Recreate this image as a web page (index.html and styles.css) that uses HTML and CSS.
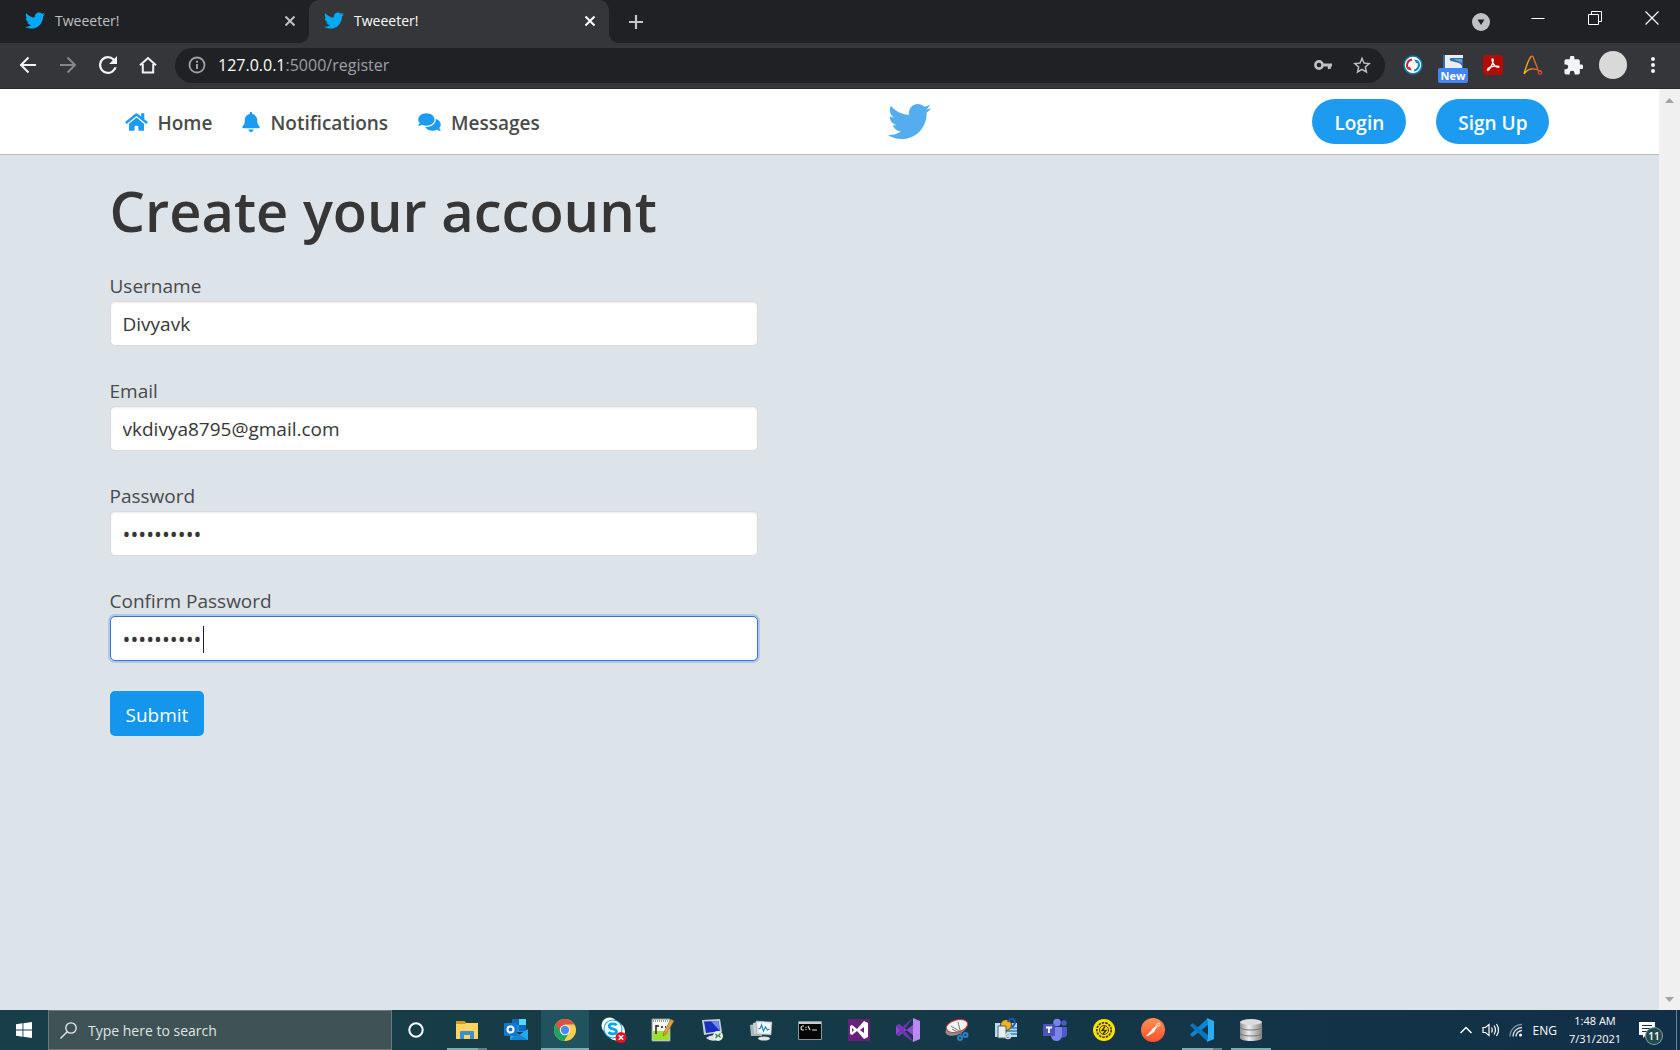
FILE: index.html
```html
<!DOCTYPE html>
<html lang="en">
<head>
<meta charset="utf-8">
<title>Tweeeter!</title>
<link rel="stylesheet" href="styles.css">
</head>
<body>
<svg class="sprite" aria-hidden="true">
  <symbol id="bird" viewBox="0 48 512 416"><path d="M459.37 151.716c.325 4.548.325 9.097.325 13.645 0 138.72-105.583 298.558-298.558 298.558-59.452 0-114.68-17.219-161.137-47.106 8.447.974 16.568 1.299 25.34 1.299 49.055 0 94.213-16.568 130.274-44.832-46.132-.975-84.792-31.188-98.112-72.772 6.498.974 12.995 1.624 19.818 1.624 9.421 0 18.843-1.3 27.614-3.573-48.081-9.747-84.143-51.98-84.143-102.985v-1.299c13.969 7.797 30.214 12.67 47.431 13.319-28.264-18.843-46.781-51.005-46.781-87.391 0-19.492 5.197-37.36 14.294-52.954 51.655 63.675 129.3 105.258 216.365 109.807-1.624-7.797-2.599-15.918-2.599-24.04 0-57.828 46.782-104.934 104.934-104.934 30.213 0 57.502 12.67 76.67 33.137 23.715-4.548 46.456-13.32 66.599-25.34-7.798 24.366-24.366 44.833-46.132 57.827 21.117-2.273 41.584-8.122 60.426-16.243-14.292 20.791-32.161 39.308-52.628 54.253z"/></symbol>
  <symbol id="cross" viewBox="0 0 12 12"><path d="M1.5 1.5l9 9M10.500 1.500l-9 9" fill="none" stroke="currentColor" stroke-width="2"/></symbol>
</svg>

<header class="browser">
  <div class="tabstrip">
    <div class="tab">
      <svg class="favicon"><use href="#bird"/></svg>
      <span class="tab-title">Tweeeter!</span>
      <button class="icon-btn tab-close" aria-label="Close tab"><svg width="12" height="12"><use href="#cross"/></svg></button>
    </div>
    <div class="tab tab-active">
      <svg class="favicon"><use href="#bird"/></svg>
      <span class="tab-title">Tweeeter!</span>
      <button class="icon-btn tab-close" aria-label="Close tab"><svg width="12" height="12"><use href="#cross"/></svg></button>
    </div>
    <button class="icon-btn new-tab" aria-label="New tab"><svg width="16" height="16" viewBox="0 0 16 16"><path d="M8 1v14M1 8h14" stroke="#c4c7ca" stroke-width="2.200"/></svg></button>
    <div class="window-controls">
      <button class="icon-btn" aria-label="Search tabs"><svg width="18" height="26" viewBox="0 0 18 26"><circle cx="9" cy="17" r="9" fill="#bdc1c6"/><path d="M5.500 14.500h7L9 20z" fill="#202124"/></svg></button>
      <button class="icon-btn" aria-label="Minimize"><svg width="14" height="14" viewBox="0 0 14 14"><path d="M.5 7.500h13" stroke="#fff"/></svg></button>
      <button class="icon-btn" aria-label="Restore"><svg width="14" height="14" viewBox="0 0 14 14" fill="none" stroke="#fff"><path d="M.5 3.500h10v10H.5zM3.500 3.500v-3h10v10h-3"/></svg></button>
      <button class="icon-btn" aria-label="Close window"><svg width="14" height="14" viewBox="0 0 14 14"><path d="M.5.5l13 13M13.500.5l-13 13" stroke="#fff" stroke-width="1.200"/></svg></button>
    </div>
  </div>

  <div class="toolbar">
    <div class="nav-buttons">
      <button class="icon-btn" aria-label="Back"><svg width="18" height="18" viewBox="0 0 18 18" fill="none" stroke="#f1f3f4" stroke-width="2"><path d="M17 9H2M9.500 1.500L2 9l7.500 7.500"/></svg></button>
      <button class="icon-btn" aria-label="Forward"><svg width="18" height="18" viewBox="0 0 18 18" fill="none" stroke="#85868a" stroke-width="2"><path d="M1 9h15M8.500 1.500L16 9l-7.500 7.500"/></svg></button>
      <button class="icon-btn" aria-label="Reload"><svg width="18" height="18" viewBox="4 4 16 16" fill="#f1f3f4"><path d="M17.650 6.350A7.958 7.958 0 0 0 12 4a8 8 0 1 0 7.730 10h-2.080A6 6 0 1 1 12 6c1.660 0 3.140.69 4.220 1.780L13 11h7V4z"/></svg></button>
      <button class="icon-btn" aria-label="Home"><svg width="18" height="18" viewBox="0 0 18 18" fill="none" stroke="#f1f3f4" stroke-width="2"><path d="M1 9.300L9 2l8 7.300M3.800 8v8.500h10.400V8"/></svg></button>
    </div>
    <div class="omnibox">
      <svg width="18" height="18" viewBox="0 0 18 18"><circle cx="9" cy="9" r="7.500" fill="none" stroke="#9aa0a6" stroke-width="1.800"/><path d="M9 8v5M9 4.800v2" stroke="#9aa0a6" stroke-width="2"/></svg>
      <div class="url" role="textbox" aria-label="Address"><b>127.0.0.1</b>:5000/register</div>
      <button class="icon-btn" aria-label="Passwords"><svg width="18" height="18" viewBox="0 0 18 18"><circle cx="5" cy="9" r="3.600" fill="none" stroke="#bdc1c6" stroke-width="2.600"/><path d="M9 7.500h9v3h-1.200V13h-3v-2.500H9z" fill="#bdc1c6"/></svg></button>
      <button class="icon-btn" aria-label="Bookmark"><svg width="18" height="18" viewBox="2 2 20 19" fill="#bdc1c6"><path d="M22 9.240l-7.190-.62L12 2 9.190 8.630 2 9.240l5.460 4.730L5.820 21 12 17.270 18.180 21l-1.630-7.030zM12 15.400l-3.760 2.270 1-4.280-3.320-2.880 4.380-.38L12 6.100l1.710 4.040 4.380.38-3.320 2.880 1 4.280z"/></svg></button>
    </div>
    <div class="extensions">
      <button class="icon-btn" aria-label="Recorder"><svg width="20" height="20" viewBox="0 0 20 20"><circle cx="10" cy="10" r="9" fill="#fff" stroke="#0e76a8" stroke-width="1.600"/><path d="M9 4.500a5.600 5.600 0 0 0-3.600 9.200" fill="none" stroke="#c62828" stroke-width="2"/><path d="M4.500 14.500l4.500 1-2.500-4z" fill="#c62828"/><path d="M11 15.500a5.600 5.600 0 0 0 3.600-9.200" fill="none" stroke="#1a86b8" stroke-width="2"/><path d="M15.500 5.500l-4.500-1 2.500 4z" fill="#1a86b8"/></svg></button>
      <button class="icon-btn ext-badged" aria-label="Selenium"><svg width="20" height="20" viewBox="0 0 20 20"><path d="M0 0h20v14H0z" fill="#e9eef3"/><path d="M0 0h20v3H8Q5 4 8 6l8 2q4 2 3 6h1V0H0zM0 0v14h2V0z" fill="#2f6fa5"/><path d="M10 4h9v4z" fill="#6aa0cc"/></svg><span class="ext-badge">New</span></button>
      <button class="icon-btn" aria-label="Acrobat"><svg width="20" height="20" viewBox="0 0 20 20"><rect width="20" height="20" rx="3" fill="#b30b00"/><path d="M9.500 4c-1.200 0 0 4.500 2.300 6.700 1.700 1.700 4.400 2 4.200 1-.3-1.400-8-.4-10.700 1.600-1.300 1-1.200 2.200-.3 2 2-.6 5-7.500 5.200-9.600.1-1-.2-1.700-.7-1.700z" fill="none" stroke="#fff" stroke-width="1.300"/></svg></button>
      <button class="icon-btn" aria-label="Axe"><svg width="20" height="20" viewBox="0 0 20 20"><defs><linearGradient id="flame" x1="0" x2="1"><stop offset="0" stop-color="#f7c21a"/><stop offset=".5" stop-color="#ee7b22"/><stop offset="1" stop-color="#dc4a2c"/></linearGradient></defs><path d="M1 19C3 12 6 4 8 1.500c1-1 2 0 2.500 1.500l5 13M1 19c2-3 4-4.500 7-5 4-.5 7 .5 10 2.500" fill="none" stroke="url(#flame)" stroke-width="1.300"/><circle cx="17" cy="17.500" r="1.700" fill="none" stroke="#dc4a2c" stroke-width="1.300"/></svg></button>
      <button class="icon-btn" aria-label="Extensions"><svg width="19" height="19" viewBox="1.500 1.500 21 21" fill="#f1f3f4"><path d="M20.500 11H19V7a2 2 0 0 0-2-2h-4V3.500a2.500 2.500 0 0 0-5 0V5H4a2 2 0 0 0-2 2v3.800h1.500a2.700 2.700 0 0 1 0 5.400H2V20a2 2 0 0 0 2 2h3.800v-1.500a2.700 2.700 0 0 1 5.400 0V22H17a2 2 0 0 0 2-2v-4h1.500a2.500 2.500 0 0 0 0-5z"/></svg></button>
      <button class="icon-btn" aria-label="Profile"><span class="avatar"></span></button>
      <button class="icon-btn" aria-label="Menu"><svg width="4" height="18" viewBox="0 0 4 18" fill="#f1f3f4"><circle cx="2" cy="3" r="2"/><circle cx="2" cy="9" r="2"/><circle cx="2" cy="15" r="2"/></svg></button>
    </div>
  </div>
</header>

<div class="viewport">
  <div class="page">
    <nav class="navbar">
      <div class="container navbar-inner">
        <div class="nav-links">
          <a href="#home"><svg width="23" height="20" viewBox="0 0 576 512"><path d="M280.370 148.260L96 300.110V464a16 16 0 0 0 16 16l112.060-.29a16 16 0 0 0 15.920-16V368a16 16 0 0 1 16-16h64a16 16 0 0 1 16 16v95.640a16 16 0 0 0 16 16.050L464 480a16 16 0 0 0 16-16V300L295.670 148.260a12.190 12.190 0 0 0-15.300 0zM571.600 251.470L488 182.560V44.050a12 12 0 0 0-12-12h-56a12 12 0 0 0-12 12v72.610L318.470 43a48 48 0 0 0-61 0L4.340 251.470a12 12 0 0 0-1.600 16.900l25.500 31A12 12 0 0 0 45.150 301l235.220-193.740a12.190 12.190 0 0 1 15.300 0L530.900 301a12 12 0 0 0 16.900-1.600l25.500-31a12 12 0 0 0-1.700-16.930z"/></svg>Home</a>
          <a href="#notifications"><svg width="18" height="20" viewBox="0 0 448 512"><path d="M224 512c35.320 0 63.970-28.650 63.970-64H160.030c0 35.350 28.650 64 63.970 64zm215.390-149.710c-19.320-20.760-55.470-51.990-55.470-154.290 0-77.700-54.480-139.900-127.940-155.160V32c0-17.670-14.320-32-31.980-32s-31.980 14.330-31.980 32v20.840C118.560 68.100 64.080 130.300 64.080 208c0 102.300-36.150 133.530-55.470 154.290-6 6.450-8.660 14.160-8.610 21.710.11 16.400 12.980 32 32.100 32h383.800c19.120 0 32-15.600 32.100-32 .05-7.550-2.610-15.270-8.610-21.710z"/></svg>Notifications</a>
          <a href="#messages"><svg width="23" height="20" viewBox="0 0 576 512"><path d="M416 192c0-88.400-93.100-160-208-160S0 103.600 0 192c0 34.300 14.100 65.900 38 92-13.400 30.200-35.500 54.200-35.800 54.500-2.200 2.300-2.800 5.700-1.500 8.700S4.800 352 8 352c36.600 0 66.900-12.300 88.700-25 32.200 15.700 70.300 25 111.300 25 114.900 0 208-71.600 208-160zm122 220c23.900-26 38-57.700 38-92 0-66.900-53.500-124.200-129.300-148.100.9 6.600 1.300 13.300 1.300 20.100 0 105.900-107.700 192-240 192-10.800 0-21.300-.8-31.700-1.900C207.800 439.600 281.800 480 368 480c41 0 79.100-9.200 111.300-25 21.800 12.700 52.100 25 88.700 25 3.200 0 6.100-1.900 7.300-4.800 1.300-2.900.7-6.300-1.500-8.700-.3-.2-22.400-24.200-35.800-54.500z"/></svg>Messages</a>
        </div>
        <a class="brand" href="#top" aria-label="Tweeeter"><svg width="43" height="35"><use href="#bird"/></svg></a>
        <div class="nav-actions">
          <button class="pill">Login</button>
          <button class="pill">Sign Up</button>
        </div>
      </div>
    </nav>

    <main class="container">
      <h1>Create your account</h1>
      <form class="register">
        <div class="field">
          <label for="username">Username</label>
          <input id="username" type="text" value="Divyavk">
        </div>
        <div class="field">
          <label for="email">Email</label>
          <input id="email" type="email" value="vkdivya8795@gmail.com">
        </div>
        <div class="field">
          <label for="password">Password</label>
          <input id="password" type="password" value="tweeter123">
        </div>
        <div class="field">
          <label for="confirm">Confirm Password</label>
          <div class="control">
            <input id="confirm" class="is-focused" type="password" value="tweeter123">
            <span class="caret"></span>
          </div>
        </div>
        <button class="submit" type="submit">Submit</button>
      </form>
    </main>
  </div>
  <div class="scrollbar" aria-hidden="true">
    <svg width="9" height="5" viewBox="0 0 9 5"><path d="M0 5L4.500 0 9 5z"/></svg>
    <svg width="9" height="5" viewBox="0 0 9 5"><path d="M0 0h9L4.500 5z"/></svg>
  </div>
</div>

<footer class="taskbar">
  <button class="start icon-btn" aria-label="Start"><svg width="16" height="16" viewBox="0 0 16 16" fill="#fff"><path d="M0 2.200l6.500-.9v6.200H0zM7.400 1.200L16 0v7.500H7.400zM0 8.500h6.500v6.200L0 13.800zM7.400 8.500H16V16l-8.600-1.200z"/></svg></button>
  <label class="search">
    <svg width="17" height="17" viewBox="0 0 17 17" fill="none" stroke="#e8eded" stroke-width="1.300"><circle cx="11" cy="6" r="5.200"/><path d="M7.200 9.800L.5 16.500"/></svg>
    <input type="text" placeholder="Type here to search" aria-label="Type here to search">
  </label>
  <button class="task icon-btn" aria-label="Cortana"><svg width="16" height="16" viewBox="0 0 16 16"><circle cx="8" cy="8" r="6.700" fill="none" stroke="#fff" stroke-width="2"/></svg></button>
  <div class="apps">
    <button class="task icon-btn running stacked" aria-label="File Explorer"><svg width="24" height="24" viewBox="0 0 24 24"><path d="M1 3h8l2 2h12v16H1z" fill="#ffd45e"/><path d="M1 3h8l2 2-1 1H1z" fill="#d99a1c"/><path d="M5 21v-7q0-1 1-1h12q1 0 1 1v7h-4v-4H9v4z" fill="#3b8fd8"/></svg></button>
    <button class="task icon-btn" aria-label="Outlook"><svg width="24" height="24" viewBox="0 0 24 24"><path d="M8 1h14v13H8z" fill="#1490df"/><path d="M15 1h7v6h-7z" fill="#50d9ff"/><path d="M8 1h7v6H8zM15 7h7v6h-7z" fill="#1068b8"/><path d="M6 12l9 5 9-6v11H6z" fill="#28a8ea"/><path d="M24 22L13 15l-7 7z" fill="#1784d8"/><rect y="5" width="13" height="13" rx="1" fill="#0f78d4"/><circle cx="6.500" cy="11.500" r="3" fill="none" stroke="#fff" stroke-width="2"/></svg></button>
    <button class="task icon-btn running current" aria-label="Chrome"><svg width="24" height="24" viewBox="0 0 24 24"><circle cx="12" cy="12" r="11" fill="#fdce4b"/><path d="M2.500 6.500A11 11 0 0 1 21.500 6.500H12L7.200 14.800z" fill="#dd5144"/><path d="M2.500 6.500A11 11 0 0 0 11 23l5-8.300L7.500 14z" fill="#1da261"/><circle cx="12" cy="12" r="5.200" fill="#f1f1f1"/><circle cx="12" cy="12" r="4.200" fill="#4c8bf5"/></svg></button>
    <button class="task icon-btn" aria-label="Skype"><svg width="26" height="26" viewBox="0 0 26 26"><circle cx="8.500" cy="8.500" r="8" fill="#fff"/><circle cx="15" cy="14.500" r="9" fill="#fff"/><circle cx="12" cy="12" r="9.500" fill="#0aa6e8"/><circle cx="12" cy="12" r="8.500" fill="#fff"/><path d="M15.500 8.300c-1.300-2-7.300-2.300-7.300.9 0 3.500 7.300 2 7.300 5.300 0 3.200-6.500 3-7.800.5" fill="none" stroke="#0aa6e8" stroke-width="2.800"/><circle cx="20" cy="20.500" r="5.500" fill="#e81123"/><path d="M17.800 18.300l4.400 4.400M22.200 18.300l-4.400 4.400" stroke="#fff" stroke-width="1.500"/></svg></button>
    <button class="task icon-btn" aria-label="Notepad++"><svg width="24" height="24" viewBox="0 0 24 24"><path d="M1 1h18v22H1z" fill="#f5f7f2" stroke="#8b9388"/><path d="M2 13h16v9H2z" fill="#9be02c"/><path d="M2 3h16" stroke="#999" stroke-dasharray="1 1" stroke-width="2"/><path d="M5 7v9M5 8h3M10 9h2M14 9h1" stroke="#222" stroke-width="1.500"/><path d="M20 1l3 2-8 13-3 2 1-4z" fill="#e8a13a" stroke="#8a5a1c" stroke-width=".6"/></svg></button>
    <button class="task icon-btn" aria-label="Remote Desktop"><svg width="24" height="24" viewBox="0 0 24 24"><path d="M2 2l18-1 2 13-18 3z" fill="#c5ccd6"/><path d="M4 3.500L18.500 3l1.500 10-14 2z" fill="#1a2fc0"/><path d="M11 3.300L18.500 3l1.500 10z" fill="#6f8cf0"/><path d="M6 20q5-4 11-2v4q-6 2-11-2z" fill="#dfe3e6"/><circle cx="18" cy="18" r="5" fill="#e9eceb"/><path d="M15.500 16l2 2-2 2M20.500 15.500l-2 2 2 2" fill="none" stroke="#2a8a3a" stroke-width="1.300"/></svg></button>
    <button class="task icon-btn" aria-label="Resource Monitor"><svg width="24" height="24" viewBox="0 0 24 24"><path d="M1 7l12-2v13H2z" fill="#aab4b8"/><path d="M4 5l11-2v13H5z" fill="#c8d0d3"/><path d="M7 3l16 1-1 13-14-1z" fill="#e6ebee" stroke="#98a4aa" stroke-width=".6"/><path d="M9 5l12 1-.6 9L10 14z" fill="#f7fcff"/><path d="M9.500 11l2-1 1-3 2 6 2-4 2 3 2-1" fill="none" stroke="#2a83c0" stroke-width="1.200"/><ellipse cx="15" cy="20.500" rx="6" ry="2" fill="#dde2e4"/></svg></button>
    <button class="task icon-btn" aria-label="Command Prompt"><svg width="24" height="24" viewBox="0 0 24 24"><path d="M.5 3.500h23v18H.5z" fill="#060606" stroke="#8d9699"/><path d="M1 4h22v2H1z" fill="#c8cdd0"/><path d="M6 8H4.500Q3 8 3 10t1.500 2H6M8 9v1M8 11v1M10 8l2 4M14 12h5" fill="none" stroke="#ddd" stroke-width="1.200"/></svg></button>
    <button class="task icon-btn" aria-label="Visual Studio 2012"><svg width="24" height="24" viewBox="0 0 24 24"><path d="M1 1h22v22H1z" fill="#68217a"/><path d="M3 8l2-1 5 4 7-8 4 2v14l-4 2-7-8-5 4-2-1zM5 10v4l2-2zM17 9l-4 3 4 3z" fill="#fff" fill-rule="evenodd"/></svg></button>
    <button class="task icon-btn" aria-label="Visual Studio"><svg width="24" height="24" viewBox="0 0 24 24"><path d="M0 8l3-2 15 12V6L3 18l-3-2V8l4 4-4 4z" fill="#8c4bcf"/><path d="M17 0L3 18l-3-2L12 4zM0 8l3-2 15 18-8-5z" fill="#7534b8"/><path d="M17 0l7 3v18l-7 3z" fill="#b98af2"/></svg></button>
    <button class="task icon-btn" aria-label="Snipping Tool"><svg width="24" height="24" viewBox="0 0 24 24"><ellipse cx="11" cy="11" rx="11" ry="6" fill="#8a8f92" transform="rotate(-20 11 11)"/><ellipse cx="12" cy="8" rx="11" ry="6" fill="#f5f5f5" stroke="#d23a3a" transform="rotate(-15 12 8)"/><path d="M13 4l3 12M7 11l10 6M6 8l8 5" stroke="#777"/><circle cx="15" cy="20" r="2" fill="none" stroke="#2782d0" stroke-width="2"/><circle cx="20.500" cy="17" r="2" fill="none" stroke="#2782d0" stroke-width="2"/></svg></button>
    <button class="task icon-btn" aria-label="Server Tools"><svg width="24" height="24" viewBox="0 0 24 24"><path d="M1 5h22v14H1z" fill="#b9daf5"/><path d="M5 10h18M5 13h18M5 16h18" stroke="#3a83c8" stroke-width="1.500"/><circle cx="12" cy="7" r="5.500" fill="#f0b323" stroke="#222" stroke-width=".8"/><path d="M14 4q1-3 4-3t3 4q-1 3-3 4" fill="none" stroke="#2257a8" stroke-width="2"/><path d="M4 8h8v12H4z" fill="#e6eef2" stroke="#4f656f"/><circle cx="14" cy="18" r="2.500" fill="none" stroke="#d5dadd" stroke-width="1.500"/></svg></button>
    <button class="task icon-btn" aria-label="Teams"><svg width="24" height="24" viewBox="0 0 24 24"><circle cx="21" cy="5" r="2.700" fill="#5059c9"/><path d="M17 9h7v8q-2 4-6 2z" fill="#5059c9"/><circle cx="14" cy="4.500" r="3.800" fill="#7b83eb"/><path d="M8 9h11v9q-1 5-5.500 5T8 18z" fill="#7b83eb"/><rect y="6" width="12" height="12" rx="1" fill="#4b53bc"/><path d="M3 9.500h6M6 9.500V15" stroke="#fff" stroke-width="1.800"/></svg></button>
    <button class="task icon-btn" aria-label="Gear"><svg width="24" height="24" viewBox="0 0 24 24"><circle cx="12" cy="12" r="11" fill="#ffe10a"/><circle cx="12" cy="12" r="7.200" fill="none" stroke="#3d3a12" stroke-width="1.600" stroke-dasharray="2.500 1"/><circle cx="12" cy="12" r="4.500" fill="none" stroke="#3d3a12"/><path d="M13 8.500l-3 4h4l-3 3.500" fill="none" stroke="#3d3a12" stroke-width="1.500"/></svg></button>
    <button class="task icon-btn" aria-label="Postman"><svg width="24" height="24" viewBox="0 0 24 24"><defs><linearGradient id="ember" y2="1" x2="0"><stop offset="0" stop-color="#ff9152"/><stop offset="1" stop-color="#ff4f2a"/></linearGradient></defs><circle cx="12" cy="12" r="12" fill="url(#ember)"/><path d="M5 18l6-6 5-3-3 5-6 4z" fill="#fff"/><circle cx="17.500" cy="6.500" r="1.500" fill="none" stroke="#fff"/><path d="M11 12l5-4" stroke="#fff" stroke-width="1.500"/></svg></button>
    <button class="task icon-btn running stacked" aria-label="VS Code"><svg width="24" height="24" viewBox="0 0 24 24"><path d="M18 0L1 15.500 0 17l2 1.500h1L18 7z" fill="#0a86d6"/><path d="M18 24L1 8.500 0 7l2-1.500h1L18 17z" fill="#0a76bd"/><path d="M17 0l7 3v18l-7 3 1-4V4z" fill="#29aef5"/></svg></button>
    <button class="task icon-btn running" aria-label="SQLite Browser"><svg width="24" height="24" viewBox="0 0 24 24"><defs><linearGradient id="steel"><stop offset="0" stop-color="#8d8d8d"/><stop offset=".4" stop-color="#eee"/><stop offset="1" stop-color="#858585"/></linearGradient></defs><path d="M1 4v16c0 4 22 4 22 0V4z" fill="url(#steel)"/><ellipse cx="12" cy="4" rx="11" ry="3" fill="#dcdcdc"/><path d="M1 9c0 4 22 4 22 0M1 15c0 4 22 4 22 0" fill="none" stroke="#777" stroke-width="1"/></svg></button>
  </div>
  <div class="tray">
    <button class="icon-btn" aria-label="Show hidden icons"><svg width="12" height="8" viewBox="0 0 12 8"><path d="M.5 7L6 1.500 11.500 7" fill="none" stroke="#fff" stroke-width="1.500"/></svg></button>
    <button class="icon-btn" aria-label="Volume"><svg width="18" height="14" viewBox="0 0 18 14" fill="none" stroke="#fff" stroke-width="1.200"><path d="M1 4.500h2.500L7 1.500v11L3.500 9.500H1zM9.500 4.500q1.500 2.500 0 5M12 2.500q3 4.500 0 9M14.500 1q4 6 0 12"/></svg></button>
    <button class="icon-btn" aria-label="Network"><svg width="14" height="14" viewBox="0 0 14 14" fill="none" stroke-width="1.300"><path d="M1 13.500A12 12 0 0 1 13 1.500" stroke="#7c909c"/><path d="M4 13.500a9 9 0 0 1 9-9M7 13.500a6 6 0 0 1 6-6" stroke="#dfe6ea"/><circle cx="11.500" cy="12" r="1.500" fill="#fff"/></svg></button>
    <span class="lang">ENG</span>
    <time class="clock" datetime="2021-07-31T01:48"><span>1:48 AM</span><span>7/31/2021</span></time>
    <button class="icon-btn action-center" aria-label="Notifications"><svg width="16" height="16" viewBox="0 0 16 16"><path d="M0 0h16v13H7l-3 3v-3H0z" fill="#fff"/><path d="M3 3.500h10M3 6.500h10M3 9.500h6" stroke="#14344a" stroke-width="1.200"/></svg><span class="count">11</span></button>
  </div>
</footer>
</body>
</html>
```
FILE: styles.css
```css
* { box-sizing: border-box; }

body {
  margin: 0;
  min-height: 100vh;
  display: flex;
  flex-direction: column;
  font-family: "Open Sans", "Noto Sans", sans-serif;
  color: #4a4a4a;
}

button, input { font: inherit; }
svg { display: block; flex: none; }
.sprite { position: absolute; width: 0; height: 0; }

.icon-btn {
  display: flex;
  align-items: center;
  justify-content: center;
  flex: none;
  padding: 0;
  border: 0;
  background: none;
  color: inherit;
}

/* Browser window */
.browser { background: #35363a; border-bottom: 1px solid #28292c; }

.tabstrip {
  display: flex;
  align-items: center;
  height: 43px;
  padding-left: 10px;
  background: #202124;
}

.tab {
  display: flex;
  align-items: center;
  gap: 10px;
  width: 299px;
  height: 43px;
  padding: 0 13px 2px 15px;
  font-size: 14px;
  color: #bdc1c6;
}

.tab-active {
  position: relative;
  width: 300px;
  background: #35363a;
  border-radius: 10px 10px 0 0;
  color: #fff;
}

.tab-active::before, .tab-active::after {
  content: "";
  position: absolute;
  bottom: 0;
  width: 10px;
  height: 10px;
}
.tab-active::before { right: 100%; background: radial-gradient(circle at 0 0, transparent 10px, #35363a 10px); }
.tab-active::after { left: 100%; background: radial-gradient(circle at 100% 0, transparent 10px, #35363a 10px); }

.favicon { width: 20px; height: 17px; fill: #03a9f4; }
.tab-title { flex: 1; }
.new-tab { margin-left: 19px; }

.window-controls {
  display: flex;
  align-self: flex-start;
  height: 36px;
  margin-left: auto;
}
.window-controls .icon-btn { width: 57px; }

.toolbar {
  display: flex;
  align-items: center;
  height: 45px;
  padding: 0 7px 1px 8px;
}
.nav-buttons { display: flex; width: 167px; }
.nav-buttons .icon-btn { width: 40px; }

.omnibox {
  flex: 1;
  display: flex;
  align-items: center;
  gap: 12px;
  height: 35px;
  padding: 0 14px 0 13px;
  border-radius: 18px;
  background: #202124;
}
.omnibox .icon-btn { margin-left: 9px; }
.url { flex: 1; font-size: 16px; color: #9aa0a6; }
.url b { font-weight: 400; color: #fff; }

.extensions { display: flex; height: 35px; padding-left: 8px; }
.extensions .icon-btn { width: 40px; }
.ext-badged { position: relative; }
.ext-badge {
  position: absolute;
  left: 5px;
  bottom: 0;
  width: 30px;
  border-radius: 2px;
  background: #4285f4;
  color: #fff;
  font-size: 11px;
  font-weight: 700;
  line-height: 15px;
}
.avatar { width: 28px; height: 28px; border-radius: 50%; background: #d9d9d9; }

/* Page */
.viewport { flex: 1; display: flex; }
.page { flex: 1; background: #dce3e9; }

.scrollbar {
  display: flex;
  flex-direction: column;
  justify-content: space-between;
  align-items: center;
  width: 21px;
  padding: 9px 0 8px;
  background: #f0f0f0;
  fill: #a3a3a3;
}

.container { max-width: 1440px; margin: 0 auto; }

.navbar { background: #fff; border-bottom: 1px solid #bcbcbc; }
.navbar-inner {
  display: flex;
  align-items: center;
  justify-content: space-between;
  height: 65px;
}

.nav-links { display: flex; }
.nav-links a {
  display: flex;
  align-items: center;
  gap: 10px;
  padding: 2px 15px 0;
  font-size: 19px;
  font-weight: 600;
  color: #4a4a4a;
  text-decoration: none;
}
.nav-links svg { margin-bottom: 2px; fill: #1d9bf0; }
.brand { fill: #55acee; }

.nav-actions { display: flex; gap: 30px; padding-left: 48px; }
.pill {
  height: 45px;
  padding: 2px 22px 0;
  border: 0;
  border-radius: 23px;
  background: #1d9bf0;
  color: #fff;
  font-size: 19px;
  font-weight: 600;
}

h1 {
  margin: 22px 0 27px;
  font-size: 56px;
  font-weight: 600;
  line-height: 67px;
  color: #363636;
}

.register { width: 45%; }
.field { margin-bottom: 30px; }
.field label { display: block; font-size: 19px; line-height: 30px; }
.control { position: relative; }

.field input {
  display: block;
  width: 100%;
  height: 45px;
  padding: 0 12px;
  border: 1px solid #dbdbdb;
  border-radius: 5px;
  background: #fff;
  box-shadow: inset 0 1px 2px rgba(10, 10, 10, .08);
  color: #363636;
  font-size: 19px;
  outline: 0;
}
.field input[type="password"] { font-size: 21px; }
.field input.is-focused { border-color: #3273dc; box-shadow: 0 0 0 2px rgba(50, 115, 220, .25); }

.caret {
  position: absolute;
  left: 93px;
  top: 10px;
  width: 1px;
  height: 27px;
  background: #222;
}

.submit {
  height: 45px;
  padding: 2px 16px 0;
  border: 0;
  border-radius: 5px;
  background: #1496ed;
  color: #fff;
  font-size: 19px;
}

/* Taskbar */
.taskbar {
  display: flex;
  height: 40px;
  background: linear-gradient(90deg, #183f49, #153a47 50%, #112f48);
}
.start { width: 48px; }
.search {
  display: flex;
  align-items: center;
  gap: 11px;
  width: 344px;
  padding: 0 11px;
  border: 1px solid #6b7b7d;
  background: #3f5356;
}
.search input {
  flex: 1;
  min-width: 0;
  padding: 0;
  border: 0;
  background: none;
  font-size: 14px;
}
.search input::placeholder { color: #dfe4e4; }

.apps { display: flex; gap: 1px; margin-left: 3px; }
.task { position: relative; width: 48px; }
.running::after {
  content: "";
  position: absolute;
  left: 4px;
  right: 4px;
  bottom: 0;
  height: 2px;
  background: #76b0b6;
}
.stacked::after { background: linear-gradient(90deg, #76b0b6 31px, #5c8389 31px); }
.current { background: #20535d; }
.current::after { left: 0; right: 0; }

.tray {
  display: flex;
  align-items: center;
  margin-left: auto;
  padding-right: 3px;
  color: #fff;
}
.tray .icon-btn { width: 25px; height: 40px; }
.lang { padding: 0 12px 0 4px; font-size: 12px; }
.clock {
  display: flex;
  flex-direction: column;
  align-items: center;
  width: 52px;
  font-size: 11px;
  line-height: 18px;
}
.tray .action-center {
  position: relative;
  width: 56px;
  padding-right: 3px;
  border-right: 1px solid #6d8290;
}
.count {
  position: absolute;
  left: 25px;
  top: 18px;
  width: 16px;
  height: 16px;
  border-radius: 50%;
  background: #1f4b50;
  box-shadow: 0 0 0 1px #86a3a5;
  font-size: 10px;
  font-weight: 600;
  line-height: 16px;
}
```
